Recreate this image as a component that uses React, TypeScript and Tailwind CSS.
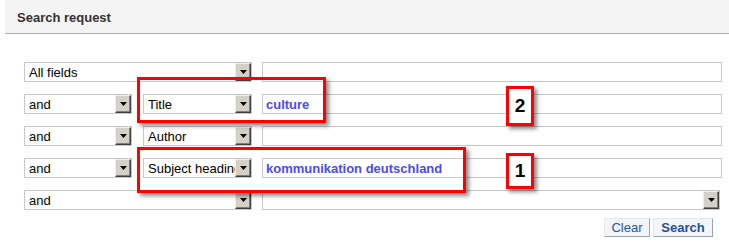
import React from 'react';

const DropButton: React.FC = () => (
  <span className="flex h-[18px] w-[16px] shrink-0 items-center justify-center border border-t-[#f0eee8] border-l-[#f0eee8] border-r-[#404040] border-b-[#404040] bg-[#d4d0c8] shadow-[inset_-1px_-1px_0_#808080]">
    <svg width="7" height="4" viewBox="0 0 7 4">
      <path d="M0 0h7L3.5 4z" fill="#000" />
    </svg>
  </span>
);

const Select: React.FC<{ value: string; className: string }> = ({ value, className }) => (
  <div className={`flex h-[20px] items-center border border-[#c8c8c8] bg-white pl-[4px] ${className}`}>
    <span className="min-w-0 flex-1 overflow-hidden whitespace-nowrap text-[13px] leading-[15px] text-black">{value}</span>
    <DropButton />
  </div>
);

const TextField: React.FC<{ value?: string; className?: string }> = ({ value, className = '' }) => (
  <div className={`flex h-[20px] w-[460px] items-center border border-[#c8c8c8] bg-white pl-[3px] ${className}`}>
    <span className="text-[13px] font-bold leading-none text-[#4a4af5]">{value}</span>
  </div>
);

const Callout: React.FC<{ className: string }> = ({ className }) => (
  <div className={`pointer-events-none absolute border-[3px] border-[#ff0000] shadow-[3px_3px_4px_rgba(0,0,0,0.45)] ${className}`} />
);

const NumberTag: React.FC<{ n: string; className: string }> = ({ n, className }) => (
  <div className={`absolute flex items-center justify-center border-[3px] border-[#ff0000] bg-white text-[19px] font-bold text-black shadow-[3px_3px_4px_rgba(0,0,0,0.45)] ${className}`}>
    {n}
  </div>
);

export default function App() {
  return (
    <div className="relative h-[246px] w-[729px] bg-white font-['Liberation_Sans',Arial,sans-serif]">
      <div className="ml-[5px] flex h-[34px] items-center border-b border-[#a9b5c4] bg-[#f4f4f4] pl-[12px] pt-[2px]">
        <span className="text-[13px] font-bold text-[#333]">Search request</span>
      </div>

      <div className="flex flex-col gap-[12px] pl-[24px] pt-[28px]">
        <div className="flex items-center gap-[10px]">
          <Select value="All fields" className="w-[228px]" />
          <TextField />
        </div>
        <div className="flex items-center gap-[10px]">
          <div className="flex gap-[11px]">
            <Select value="and" className="w-[108px]" />
            <Select value="Title" className="w-[109px]" />
          </div>
          <TextField value="culture" />
        </div>
        <div className="flex items-center gap-[10px]">
          <div className="flex gap-[11px]">
            <Select value="and" className="w-[108px]" />
            <Select value="Author" className="w-[109px]" />
          </div>
          <TextField />
        </div>
        <div className="flex items-center gap-[10px]">
          <div className="flex gap-[11px]">
            <Select value="and" className="w-[108px]" />
            <Select value="Subject headings" className="w-[109px]" />
          </div>
          <TextField value="kommunikation deutschland" />
        </div>
        <div className="flex items-center gap-[10px]">
          <Select value="and" className="w-[228px]" />
          <Select value="" className="w-[458px]" />
        </div>
      </div>

      <div className="mt-[8px] flex justify-end gap-[3px] pr-[16px]">
        <button className="h-[19px] w-[46px] border border-[#e4e8ee] border-r-[#9aa2ac] border-b-[#9aa2ac] bg-[#f3f5f8] text-[13px] leading-none text-[#2255aa]">
          Clear
        </button>
        <button className="h-[19px] w-[60px] border border-[#e4e8ee] border-r-[#9aa2ac] border-b-[#9aa2ac] bg-[#f3f5f8] text-[13px] font-bold leading-none text-[#1f4fa0]">
          Search
        </button>
      </div>

      <Callout className="left-[137px] top-[77px] h-[46px] w-[189px]" />
      <Callout className="left-[137px] top-[147px] h-[46px] w-[329px]" />
      <NumberTag n="2" className="left-[506px] top-[86px] h-[40px] w-[28px]" />
      <NumberTag n="1" className="left-[506px] top-[153px] h-[36px] w-[28px]" />
    </div>
  );
}
